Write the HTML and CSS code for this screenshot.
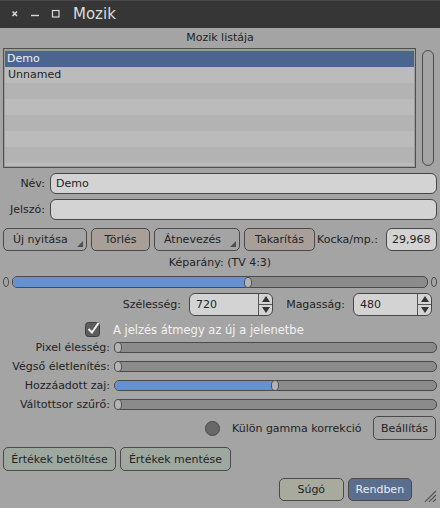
FILE: index.html
```html
<!DOCTYPE html>
<html>
<head>
<meta charset="utf-8">
<link rel="stylesheet" href="styles.css">
</head>
<body>
<div class="window">
  <div class="titlebar">
    <svg class="tb-icon" width="60" height="28" viewBox="0 0 60 28">
      <path d="M12.5 11.5 L17 16 M17 11.5 L12.5 16" stroke="#d8d8d8" stroke-width="1.6"/>
      <path d="M31 15.5 H39" stroke="#d8d8d8" stroke-width="1.4"/>
      <rect x="52.5" y="10.5" width="6.5" height="6.5" fill="none" stroke="#d8d8d8" stroke-width="1.2"/>
    </svg>
    <span class="title">Mozik</span>
  </div>
  <div class="main">
    <div class="section-title">Mozik listája</div>
    <div class="listrow">
      <div class="listbox">
        <div class="list-inner">
          <div class="item selected">Demo</div>
          <div class="item even">Unnamed</div>
          <div class="item odd"></div>
          <div class="item even"></div>
          <div class="item odd"></div>
          <div class="item even"></div>
          <div class="item odd"></div>
          <div class="item even"></div>
        </div>
      </div>
      <div class="scrollbar"></div>
    </div>
    <div class="field first">
      <span class="flabel">Név:</span>
      <div class="input">Demo</div>
    </div>
    <div class="field">
      <span class="flabel">Jelszó:</span>
      <div class="input"></div>
    </div>
    <div class="buttons">
      <div class="btn menu w-uj">Új nyitása<span class="corner"></span></div>
      <div class="btn warm w-torles">Törlés</div>
      <div class="btn menu w-atn">Átnevezés<span class="corner"></span></div>
      <div class="btn warm w-tak">Takarítás</div>
      <span class="kocka">Kocka/mp.:</span>
      <div class="input small">29,968</div>
    </div>
    <div class="aspect-label">Képarány: (TV 4:3)</div>
    <div class="aspect-row">
      <span class="endcap"></span>
      <div class="track main-track">
        <div class="fill" style="width: 56%"></div>
        <span class="handle"></span>
      </div>
      <span class="endcap"></span>
    </div>
    <div class="spinrow">
      <span class="slabel w-szel">Szélesség:</span>
      <div class="spin w1"><span class="val">720</span><span class="arrows"><span class="up"></span><span class="down"></span></span></div>
      <span class="slabel w-mag">Magasság:</span>
      <div class="spin w2"><span class="val">480</span><span class="arrows"><span class="up"></span><span class="down"></span></span></div>
    </div>
    <div class="checkrow">
      <svg class="check" width="17" height="17" viewBox="0 0 17 17">
        <rect x="0.5" y="2.5" width="14" height="14" rx="3" fill="#5d5d5d" stroke="#3e3e3e"/>
        <path d="M3.5 9 L7 12.5 L13.5 3" fill="none" stroke="#f2f2f2" stroke-width="2"/>
      </svg>
      <span class="checktext">A jelzés átmegy az új a jelenetbe</span>
    </div>
    <div class="sliders">
      <span class="slbl">Pixel élesség:</span>
      <div class="track"><span class="handle"></span></div>
      <span class="slbl">Végső életlenítés:</span>
      <div class="track"><span class="handle"></span></div>
      <span class="slbl">Hozzáadott zaj:</span>
      <div class="track"><div class="fill" style="width: 49%"></div><span class="handle"></span></div>
      <span class="slbl">Váltottsor szűrő:</span>
      <div class="track"><span class="handle"></span></div>
    </div>
    <div class="gammarow">
      <span class="radio"></span>
      <span class="gtext">Külön gamma korrekció</span>
      <div class="btn w-beall">Beállítás</div>
    </div>
    <div class="valrow">
      <div class="btn green w-bet">Értékek betöltése</div>
      <div class="btn green w-ment">Értékek mentése</div>
    </div>
    <div class="okrow">
      <div class="btn help w-sugo">Súgó</div>
      <div class="btn ok w-rend">Rendben</div>
      <svg class="grip" width="14" height="16" viewBox="0 0 14 16">
        <path d="M2 15 L13 4 M6 15 L13 8 M10 15 L13 12" stroke="#555" stroke-width="1.2"/>
      </svg>
    </div>
  </div>
</div>
</body>
</html>
```
FILE: styles.css
```css
* { box-sizing: border-box; }
html, body { margin: 0; padding: 0; }
body {
  width: 440px;
  height: 508px;
  background: #a4a4a4;
  font-family: "DejaVu Sans", "Liberation Sans", sans-serif;
  font-size: 11px;
  color: #232323;
  overflow: hidden;
}
.window { width: 440px; height: 508px; }
.titlebar {
  height: 28px;
  background: #363636;
  border-top: 1px solid #4a4a4a;
  display: flex;
  align-items: center;
}
.tb-icon { display: block; margin-top: -1px; }
.title {
  margin-left: 13px;
  color: #dcdcdc;
  font-size: 15px;
  margin-top: -1px;
}
.main { padding: 0 3px; }
.section-title {
  margin-top: 2px;
  height: 16px;
  line-height: 16px;
  text-align: center;
}
.listrow { margin-top: 2px; display: flex; height: 120px; }
.listbox {
  width: 413px;
  height: 120px;
  border: 1px solid #505050;
  padding: 2px 1px 1px 1px;
  background: #9c9c9c;
}
.list-inner { height: 115px; overflow: hidden; }
.item { height: 16px; line-height: 15px; padding-left: 2px; }
.item.selected { background: #4b6591; color: #eef0f4; }
.item.even { background: #bbbbbb; padding-left: 3px; }
.item.odd { background: #b3b3b3; }
.scrollbar {
  margin-left: 6px;
  margin-top: 2px;
  width: 12px;
  height: 116px;
  border: 1px solid #4a4a4a;
  border-radius: 6px;
}
.field { display: flex; align-items: center; margin-top: 5px; height: 21px; }
.field.first { margin-top: 5px; }
.flabel { width: 42px; text-align: right; margin-right: 5px; }
.input {
  flex: 1;
  height: 21px;
  background: #d3d3d3;
  border: 1px solid #464646;
  border-radius: 6px;
  padding-left: 5px;
  line-height: 19px;
}
.buttons { display: flex; align-items: center; margin-top: 8px; height: 23px; }
.btn {
  position: relative;
  height: 23px;
  border: 1px solid #4a4a4a;
  border-radius: 5px;
  display: flex;
  align-items: center;
  justify-content: center;
  white-space: nowrap;
}
.btn.menu { justify-content: flex-start; padding-left: 9px; }
.btn.warm { background: #a99f99; }
.corner {
  position: absolute;
  right: 3px;
  bottom: 3px;
  width: 0; height: 0;
  border-left: 6px solid transparent;
  border-bottom: 6px solid #505050;
}
.w-uj { width: 84px; }
.w-torles { width: 59px; margin-left: 4px; }
.w-atn { width: 86px; margin-left: 4px; padding-left: 10px; }
.w-tak { width: 71px; margin-left: 4px; }
.kocka { margin-left: 2px; width: 64px; }
.input.small { flex: none; width: 51px; margin-left: 5px; height: 23px; line-height: 21px; padding-left: 5px; }
.aspect-label { margin-top: 4px; height: 16px; line-height: 16px; text-align: center; }
.aspect-row { display: flex; align-items: center; margin-top: 5px; height: 12px; }
.endcap {
  width: 6px; height: 10px;
  border: 1px solid #4c4c4c;
  border-radius: 3px / 5px;
}
.track {
  position: relative;
  height: 11px;
  background: #8b8b8b;
  border: 1px solid #4a4a4a;
  border-radius: 5px;
  display: flex;
  align-items: center;
}
.main-track { flex: 1; margin: 0 3px; height: 12px; }
.fill {
  height: 100%;
  background: #6590d2;
  border-radius: 4px 0 0 4px;
}
.handle {
  width: 8px;
  height: 11px;
  background: #b4b4b4;
  border: 1px solid #505050;
  border-radius: 4px / 5px;
  flex: none;
  margin-left: -1px;
}
.spinrow { display: flex; align-items: center; margin-top: 5px; height: 23px; }
.slabel { text-align: right; }
.w-szel { width: 178px; margin-right: 8px; }
.w-mag { width: 59px; margin-left: 13px; margin-right: 8px; }
.spin {
  height: 23px;
  background: #d3d3d3;
  border: 1px solid #464646;
  border-radius: 6px;
  display: flex;
}
.spin.w1 { width: 84px; }
.spin.w2 { width: 79px; }
.val { flex: 1; padding-left: 6px; line-height: 21px; }
.arrows {
  width: 14px;
  border-left: 1px solid #555;
  display: flex;
  flex-direction: column;
}
.arrows span { flex: 1; display: flex; align-items: center; justify-content: center; }
.arrows .up { border-bottom: 1px solid #555; }
.arrows .up::after {
  content: "";
  border-left: 4px solid transparent;
  border-right: 4px solid transparent;
  border-bottom: 6px solid #333;
}
.arrows .down::after {
  content: "";
  border-left: 4px solid transparent;
  border-right: 4px solid transparent;
  border-top: 6px solid #333;
}
.checkrow { display: flex; align-items: center; margin-top: 4px; height: 17px; }
.check { margin-left: 82px; display: block; }
.checktext { margin-left: 11px; color: #f2f2f2; font-size: 11.5px; margin-top: 2px; }
.sliders {
  margin-top: 5px;
  display: grid;
  grid-template-columns: 107px 1fr;
  grid-auto-rows: 11px;
  row-gap: 8px;
  column-gap: 4px;
  align-items: center;
}
.slbl { text-align: right; line-height: 11px; }
.sliders .track { margin-right: 0; }
.gammarow { display: flex; align-items: center; margin-top: 6px; height: 24px; }
.radio {
  margin-left: 202px;
  width: 15px;
  height: 15px;
  border-radius: 50%;
  background: #686868;
  border: 1px solid #484848;
}
.gtext { margin-left: 12px; width: 141px; }
.btn.w-beall { width: 63px; height: 24px; margin-left: 0; }
.valrow { display: flex; margin-top: 7px; height: 24px; }
.btn.green { background: #9ea89f; height: 24px; }
.w-bet { width: 113px; }
.w-ment { width: 111px; margin-left: 4px; }
.okrow { display: flex; margin-top: 7px; height: 23px; padding-left: 276px; }
.btn.help { background: #a9aa9e; }
.btn.ok { background: #5c6e8e; color: #e8ecf4; }
.w-sugo { width: 65px; }
.w-rend { width: 65px; margin-left: 4px; }
.grip { margin-left: 11px; margin-top: 9px; display: block; }
```
